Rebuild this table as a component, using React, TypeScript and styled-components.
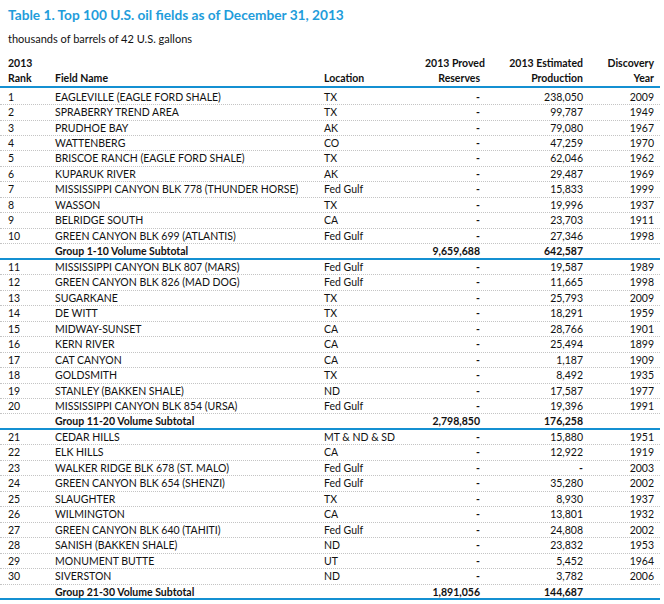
import React from "react";
import styled, { createGlobalStyle } from "styled-components";

const GlobalStyle = createGlobalStyle`
  html, body { margin: 0; padding: 0; background: #ffffff; }
  body { font-family: "Lato", "Open Sans", sans-serif; color: #111; }
`;

const BLUE = "#1490d2";
const COLS = "55px 269px 101px 55px 103px 71px";

const Page = styled.div`
  width: 664px;
  height: 604px;
  overflow: hidden;
  box-sizing: border-box;
  padding-top: 6px;
`;

const Title = styled.h1`
  margin: 0 0 0 8px;
  font-size: 13.7px;
  line-height: 18px;
  font-weight: 700;
  color: #1f9ddb;
`;

const Subtitle = styled.div`
  margin: 8px 0 0 8px;
  font-size: 11px;
  line-height: 14px;
`;

const Table = styled.div`
  width: 660px;
  margin-top: 9px;
`;

const HeaderRow = styled.div`
  display: grid;
  grid-template-columns: ${COLS};
  align-items: end;
  font-weight: 700;
  font-size: 10.5px;
  line-height: 15px;
  padding-top: 1px;
  border-bottom: 2px solid ${BLUE};
  margin-bottom: 1.6px;
`;

const Cell = styled.div<{ $align?: "left" | "right"; $pad?: boolean }>`
  text-align: ${(p) => p.$align ?? "left"};
  padding-left: ${(p) => (p.$pad ? "8px" : "0")};
  white-space: nowrap;
`;

const Row = styled.div<{ $subtotal?: boolean }>`
  display: grid;
  grid-template-columns: ${COLS};
  box-sizing: border-box;
  height: 15.47px;
  line-height: 14.47px;
  font-size: 10.5px;
  font-weight: ${(p) => (p.$subtotal ? 700 : 400)};
  border-bottom: ${(p) =>
    p.$subtotal ? `2px solid ${BLUE}` : "1px dotted #c4c4c4"};
`;

const Dash = styled.span`
  font-weight: 700;
`;

type Field = [string, string, string, string, string];

const groups: { label: string; reserves: string; production: string; rows: Field[] }[] = [
  {
    label: "Group 1-10 Volume Subtotal",
    reserves: "9,659,688",
    production: "642,587",
    rows: [
      ["1", "EAGLEVILLE (EAGLE FORD SHALE)", "TX", "238,050", "2009"],
      ["2", "SPRABERRY TREND AREA", "TX", "99,787", "1949"],
      ["3", "PRUDHOE BAY", "AK", "79,080", "1967"],
      ["4", "WATTENBERG", "CO", "47,259", "1970"],
      ["5", "BRISCOE RANCH (EAGLE FORD SHALE)", "TX", "62,046", "1962"],
      ["6", "KUPARUK RIVER", "AK", "29,487", "1969"],
      ["7", "MISSISSIPPI CANYON BLK 778 (THUNDER HORSE)", "Fed Gulf", "15,833", "1999"],
      ["8", "WASSON", "TX", "19,996", "1937"],
      ["9", "BELRIDGE SOUTH", "CA", "23,703", "1911"],
      ["10", "GREEN CANYON BLK 699 (ATLANTIS)", "Fed Gulf", "27,346", "1998"],
    ],
  },
  {
    label: "Group 11-20 Volume Subtotal",
    reserves: "2,798,850",
    production: "176,258",
    rows: [
      ["11", "MISSISSIPPI CANYON BLK 807 (MARS)", "Fed Gulf", "19,587", "1989"],
      ["12", "GREEN CANYON BLK 826 (MAD DOG)", "Fed Gulf", "11,665", "1998"],
      ["13", "SUGARKANE", "TX", "25,793", "2009"],
      ["14", "DE WITT", "TX", "18,291", "1959"],
      ["15", "MIDWAY-SUNSET", "CA", "28,766", "1901"],
      ["16", "KERN RIVER", "CA", "25,494", "1899"],
      ["17", "CAT CANYON", "CA", "1,187", "1909"],
      ["18", "GOLDSMITH", "TX", "8,492", "1935"],
      ["19", "STANLEY (BAKKEN SHALE)", "ND", "17,587", "1977"],
      ["20", "MISSISSIPPI CANYON BLK 854 (URSA)", "Fed Gulf", "19,396", "1991"],
    ],
  },
  {
    label: "Group 21-30 Volume Subtotal",
    reserves: "1,891,056",
    production: "144,687",
    rows: [
      ["21", "CEDAR HILLS", "MT & ND & SD", "15,880", "1951"],
      ["22", "ELK HILLS", "CA", "12,922", "1919"],
      ["23", "WALKER RIDGE BLK 678 (ST. MALO)", "Fed Gulf", "-", "2003"],
      ["24", "GREEN CANYON BLK 654 (SHENZI)", "Fed Gulf", "35,280", "2002"],
      ["25", "SLAUGHTER", "TX", "8,930", "1937"],
      ["26", "WILMINGTON", "CA", "13,801", "1932"],
      ["27", "GREEN CANYON BLK 640 (TAHITI)", "Fed Gulf", "24,808", "2002"],
      ["28", "SANISH (BAKKEN SHALE)", "ND", "23,832", "1953"],
      ["29", "MONUMENT BUTTE", "UT", "5,452", "1964"],
      ["30", "SIVERSTON", "ND", "3,782", "2006"],
    ],
  },
];

export default function App() {
  return (
    <>
      <GlobalStyle />
      <Page>
        <Title>Table 1. Top 100 U.S. oil fields as of December 31, 2013</Title>
        <Subtitle>thousands of barrels of 42 U.S. gallons</Subtitle>
        <Table>
          <HeaderRow>
            <Cell $pad>
              2013
              <br />
              Rank
            </Cell>
            <Cell>Field Name</Cell>
            <Cell>Location</Cell>
            <Cell $align="right">
              2013 Proved
              <br />
              Reserves
            </Cell>
            <Cell $align="right">
              2013 Estimated
              <br />
              Production
            </Cell>
            <Cell $align="right">
              Discovery
              <br />
              Year
            </Cell>
          </HeaderRow>
          {groups.map((g) => (
            <React.Fragment key={g.label}>
              {g.rows.map(([rank, name, loc, prod, year]) => (
                <Row key={rank}>
                  <Cell $pad>{rank}</Cell>
                  <Cell>{name}</Cell>
                  <Cell>{loc}</Cell>
                  <Cell $align="right">
                    <Dash>-</Dash>
                  </Cell>
                  <Cell $align="right">{prod === "-" ? <Dash>-</Dash> : prod}</Cell>
                  <Cell $align="right">{year}</Cell>
                </Row>
              ))}
              <Row $subtotal>
                <Cell $pad />
                <Cell>{g.label}</Cell>
                <Cell />
                <Cell $align="right">{g.reserves}</Cell>
                <Cell $align="right">{g.production}</Cell>
                <Cell />
              </Row>
            </React.Fragment>
          ))}
        </Table>
      </Page>
    </>
  );
}
